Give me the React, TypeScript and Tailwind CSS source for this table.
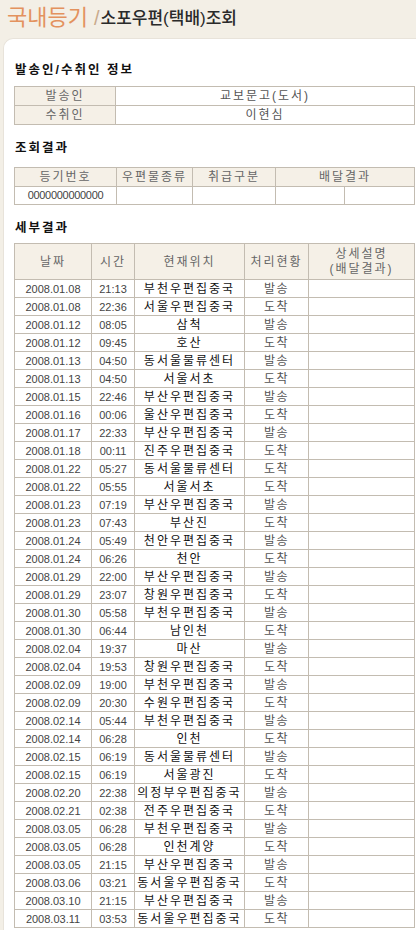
const senderRows = [
  ["발송인", "교보문고(도서)"],
  ["수취인", "이현심"],
];

const details: [string, string, string, string][] = [
  ["2008.01.08", "21:13", "부천우편집중국", "발송"],
  ["2008.01.08", "22:36", "서울우편집중국", "도착"],
  ["2008.01.12", "08:05", "삼척", "발송"],
  ["2008.01.12", "09:45", "호산", "도착"],
  ["2008.01.13", "04:50", "동서울물류센터", "발송"],
  ["2008.01.13", "04:50", "서울서초", "도착"],
  ["2008.01.15", "22:46", "부산우편집중국", "발송"],
  ["2008.01.16", "00:06", "울산우편집중국", "도착"],
  ["2008.01.17", "22:33", "부산우편집중국", "발송"],
  ["2008.01.18", "00:11", "진주우편집중국", "도착"],
  ["2008.01.22", "05:27", "동서울물류센터", "도착"],
  ["2008.01.22", "05:55", "서울서초", "도착"],
  ["2008.01.23", "07:19", "부산우편집중국", "발송"],
  ["2008.01.23", "07:43", "부산진", "도착"],
  ["2008.01.24", "05:49", "천안우편집중국", "발송"],
  ["2008.01.24", "06:26", "천안", "도착"],
  ["2008.01.29", "22:00", "부산우편집중국", "발송"],
  ["2008.01.29", "23:07", "창원우편집중국", "도착"],
  ["2008.01.30", "05:58", "부천우편집중국", "발송"],
  ["2008.01.30", "06:44", "남인천", "도착"],
  ["2008.02.04", "19:37", "마산", "발송"],
  ["2008.02.04", "19:53", "창원우편집중국", "도착"],
  ["2008.02.09", "19:00", "부천우편집중국", "발송"],
  ["2008.02.09", "20:30", "수원우편집중국", "도착"],
  ["2008.02.14", "05:44", "부천우편집중국", "발송"],
  ["2008.02.14", "06:28", "인천", "도착"],
  ["2008.02.15", "06:19", "동서울물류센터", "발송"],
  ["2008.02.15", "06:19", "서울광진", "도착"],
  ["2008.02.20", "22:38", "의정부우편집중국", "발송"],
  ["2008.02.21", "02:38", "전주우편집중국", "도착"],
  ["2008.03.05", "06:28", "부천우편집중국", "발송"],
  ["2008.03.05", "06:28", "인천계양", "도착"],
  ["2008.03.05", "21:15", "부산우편집중국", "발송"],
  ["2008.03.06", "03:21", "동서울우편집중국", "도착"],
  ["2008.03.10", "21:15", "부산우편집중국", "발송"],
  ["2008.03.11", "03:53", "동서울우편집중국", "도착"],
];

const font = "font-['Liberation_Sans','Noto_Sans_CJK_KR',sans-serif]";
const cell = "border border-[#c3bcb1] p-0 text-center align-middle";
const head = "border border-[#c3bcb1] p-0 text-center align-middle bg-[#f5f0e7] text-[#666] font-normal";
const num = "text-[11px] tracking-normal text-[#444]";

function SectionTitle({ children }: { children: React.ReactNode }) {
  return (
    <h2 className="h-[14px] pl-[1px] text-[12.5px] leading-[14px] font-bold text-[#111] tracking-[2px]">
      {children}
    </h2>
  );
}

export default function App() {
  return (
    <div className={`min-h-[930px] w-[416px] overflow-hidden bg-[#f3efe6] ${font}`}>
      {/* Title */}
      <div className="flex h-[38px] items-center pl-[7px] pb-[2px] leading-none">
        <span className="text-[22px] text-[#e3925e]">국내등기</span>
        <span className="ml-[6px] text-[20px] text-[#c9aa8c]">/</span>
        <span className="ml-[1px] text-[17px] font-medium text-[#2a2a2a]">
          소포우편(택배)조회
        </span>
      </div>

      {/* Panel */}
      <div className="ml-[3px] rounded-tl-[10px] border-t border-l border-[#e8e3da] bg-white pt-[24px] pr-[2px] pl-[10px] pb-[10px]">
        <SectionTitle>발송인/수취인 정보</SectionTitle>
        <table className="mt-[9px] w-[401px] border-collapse text-[12px] tracking-[2px] text-[#555]">
          <tbody>
            {senderRows.map(([k, v]) => (
              <tr key={k} className="h-[19px]">
                <th className={`${head} w-[101px]`}>{k}</th>
                <td className={cell}>{v}</td>
              </tr>
            ))}
          </tbody>
        </table>

        <div className="mt-[16px]">
          <SectionTitle>조회결과</SectionTitle>
        </div>
        <table className="mt-[12px] w-[401px] border-collapse text-[12px] tracking-[2px] text-[#555]">
          <tbody>
            <tr className="h-[18px]">
              <th className={`${head} w-[102px]`}>등기번호</th>
              <th className={`${head} w-[76px]`}>우편물종류</th>
              <th className={`${head} w-[83px]`}>취급구분</th>
              <th className={head} colSpan={2}>배달결과</th>
            </tr>
            <tr className="h-[18px]">
              <td className={`${cell} text-[11px] tracking-[-0.3px] text-[#444]`}>0000000000000</td>
              <td className={cell}></td>
              <td className={cell}></td>
              <td className={`${cell} w-[69px]`}></td>
              <td className={cell}></td>
            </tr>
          </tbody>
        </table>

        <div className="mt-[16px]">
          <SectionTitle>세부결과</SectionTitle>
        </div>
        <table className="mt-[8px] w-[401px] border-collapse text-[12px] tracking-[2px] text-[#555]">
          <thead>
            <tr className="h-[36px]">
              <th className={`${head} w-[77px]`}>날짜</th>
              <th className={`${head} w-[43px]`}>시간</th>
              <th className={`${head} w-[110px]`}>현재위치</th>
              <th className={`${head} w-[64px]`}>처리현황</th>
              <th className={`${head} leading-[15px]`}>
                상세설명
                <br />
                (배달결과)
              </th>
            </tr>
          </thead>
          <tbody>
            {details.map(([d, t, loc, st], i) => (
              <tr key={i} className="h-[18px] leading-[16px]">
                <td className={`${cell} ${num}`}>{d}</td>
                <td className={`${cell} ${num}`}>{t}</td>
                <td className={`${cell} text-[#111]`}>{loc}</td>
                <td className={`${cell} tracking-[1.5px]`}>{st}</td>
                <td className={cell}></td>
              </tr>
            ))}
          </tbody>
        </table>
      </div>
    </div>
  );
}
